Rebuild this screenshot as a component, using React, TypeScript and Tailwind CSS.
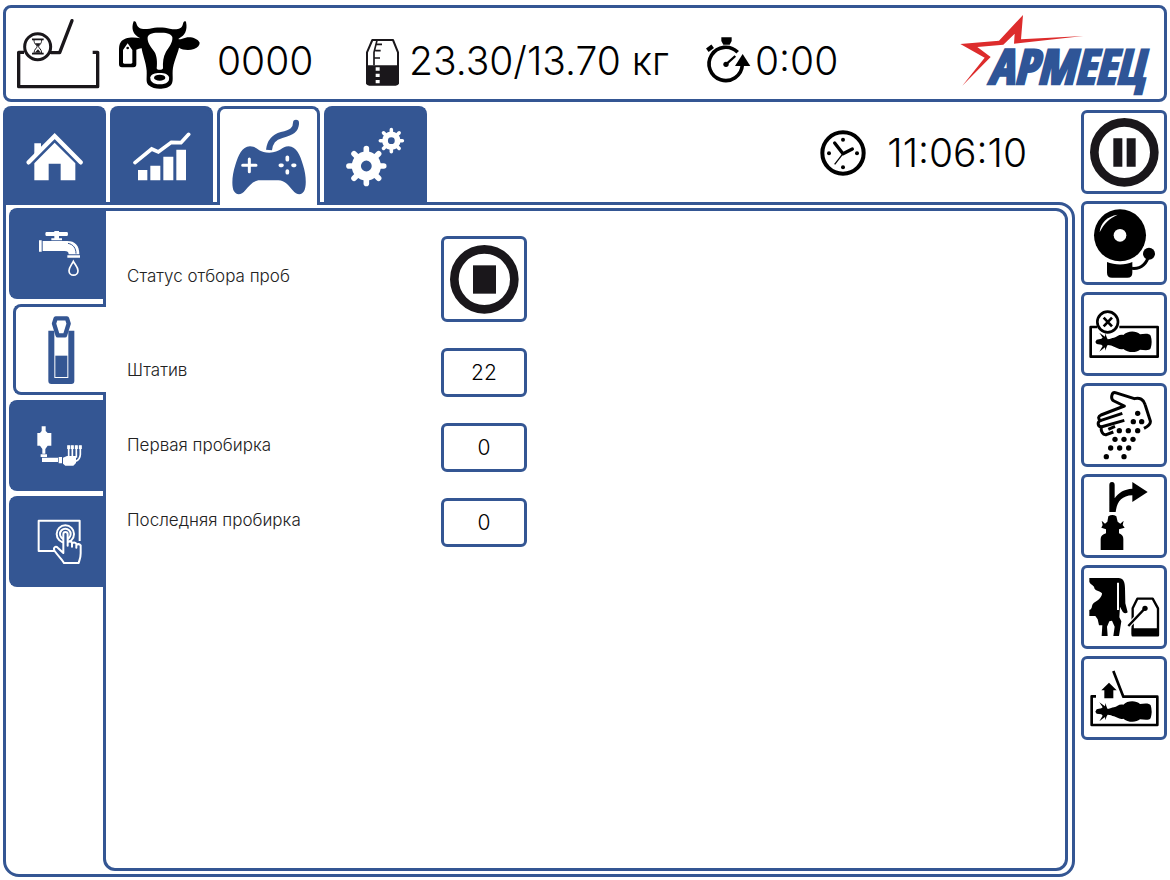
import React, { useState } from 'react';
import type { ReactNode } from 'react';

interface IconProps {
  box: string;
  className: string;
  children: ReactNode;
}

const Icon = ({ box, className, children }: IconProps) => (
  <svg viewBox={box} className={`shrink-0 ${className}`} fill="none" aria-hidden="true">
    {children}
  </svg>
);

// Header icons

const ScaleIcon = () => (
  <Icon box="45 54 258 216" className="w-[86px] h-[72px]">
    <g stroke="#1a171b" strokeWidth="10" strokeLinejoin="round">
      <path d="M72 157H56V260H293V157H278" />
      <path d="M154 158H179L216 62" strokeLinecap="round" />
      <circle cx="113" cy="140" r="39" strokeWidth="9" />
    </g>
    <path d="M96 118H131M96 161H131" stroke="#1a171b" strokeWidth="5" />
    <path d="M102 120C102 133 111 135 111 140C111 145 102 147 102 159M125 120C125 133 116 135 116 140C116 145 125 147 125 159" stroke="#1a171b" strokeWidth="3" />
    <path d="M105 130H122L114 140ZM104 158L114 148L123 158Z" fill="#1a171b" />
  </Icon>
);

const CowIcon = () => (
  <Icon box="354 60 252 210" className="w-[84px] h-[70px]">
    <path
      fill="#000"
      d="M404 67C399 80 398 97 410 108C416 114 421 116 424 118C400 112 375 116 366 128C360 136 360 145 360 155V196Q360 205 369 205H403Q412 205 412 196V152C418 150 424 147 428 148C430 165 441 190 443 215C444 240 440 247 448 258C458 267 470 269 482 269C495 269 508 267 516 258C524 247 520 235 521 215C523 190 536 165 540 146C550 153 570 155 585 150C597 145 602 138 602 131C596 118 575 112 560 116C550 119 543 122 538 120L543 116C555 110 567 95 561 68C555 64 553 70 551 78C547 92 530 92 512 89C495 84 470 84 452 89C430 92 418 90 413 76C411 68 409 65 404 67Z"
    />
    <path fill="#fff" d="M446 114C450 102 465 101 482 101C500 101 515 102 520 114C522 130 510 145 501 158C493 172 491 190 492 208C490 214 474 214 473 208C475 190 474 170 466 158C455 143 444 130 446 114Z" />
    <path fill="#fff" d="M454 235C456 225 468 222 482 222C498 222 508 226 510 235C512 248 504 256 482 256C462 256 453 248 454 235Z" />
    <ellipse cx="482" cy="236" rx="17" ry="9" fill="#000" />
    <path fill="#fff" d="M372 190V153L386 133L400 153V190Q400 194 396 194H376Q372 194 372 190Z" />
    <circle cx="386" cy="147" r="4" fill="#000" />
  </Icon>
);

const MilkCanIcon = () => (
  <Icon box="78 112 108 150" className="w-9 h-[50px]">
    <path d="M100 121H162L177 158V250H84V158Z" stroke="#1a171b" strokeWidth="6" strokeLinejoin="round" />
    <path d="M81 197H180V248Q180 258 170 258H91Q81 258 81 248Z" fill="#1a171b" />
    <path d="M114 122L105 158V197M112 134H129M109 153H125M106 175H123" stroke="#1a171b" strokeWidth="5" />
    <path d="M116 203V252" stroke="#fff" strokeWidth="12" strokeDasharray="10 9" />
  </Icon>
);

const StopwatchIcon = () => (
  <Icon box="1098 102 138 150" className="w-[46px] h-[50px]">
    <path d="M1210 192A50 50 0 1 1 1196 154" stroke="#000" strokeWidth="11" />
    <path d="M1188 195H1234L1211 159Z" fill="#000" />
    <path d="M1147 109H1178V120L1172 131H1153L1147 120Z" fill="#000" />
    <path d="M1105 148L1121 136" stroke="#000" strokeWidth="13" />
    <path d="M1161 190L1189 165" stroke="#000" strokeWidth="7" />
    <circle cx="1161" cy="190" r="8" fill="#000" />
  </Icon>
);

const Logo = () => (
  <svg viewBox="60 39 570 240" className="w-[190px] h-20 shrink-0 overflow-visible" role="img" aria-label="Армеец">
    <path fill="#dd2c2c" d="M61 129L177 119L249 42L243 115L430 105L222 128L224 98L190 131L112 138L152 168L67 254L134 170Z" />
    <text
      x="145"
      y="250"
      fontSize="144"
      fontWeight="700"
      fontStyle="italic"
      fill="#2f5597"
      stroke="#2f5597"
      strokeWidth="8"
      fontFamily="'Open Sans Condensed', 'Roboto Condensed', sans-serif"
    >
      АРМЕЕЦ
    </text>
  </svg>
);

const ClockIcon = () => (
  <Icon box="63 54 144 144" className="w-12 h-12">
    <circle cx="135" cy="126" r="62" stroke="#000" strokeWidth="12" />
    <path d="M135 128L110 96M135 128L163 114" stroke="#000" strokeWidth="10" strokeLinecap="round" />
    <path d="M135 128L110 160" stroke="#000" strokeWidth="4" />
    <g fill="#000">
      <circle cx="135" cy="86" r="6" />
      <circle cx="135" cy="169" r="6" />
      <circle cx="93" cy="127" r="6" />
      <circle cx="177" cy="127" r="6" />
    </g>
  </Icon>
);

// Top tab icons

const HomeIcon = () => (
  <Icon box="78 94 174 150" className="w-[58px] h-[50px]">
    <path d="M103 128H123V146L103 166Z" fill="#fff" />
    <path d="M86 185L164 106L242 185" stroke="#fff" strokeWidth="13" strokeLinecap="round" />
    <path d="M103 239V188L164 126L226 188V239H182V189H146V239Z" fill="#fff" />
  </Icon>
);

const ChartIcon = () => (
  <Icon box="399 90 174 150" className="w-[58px] h-[50px]">
    <path d="M414 204H442V235H414ZM451 191H481V235H451ZM490 164H520V235H490ZM529 143H558V235H529Z" fill="#fff" />
    <path d="M405 182L455 141L475 150L514 121L543 122L566 97" stroke="#fff" strokeWidth="11" strokeLinecap="round" />
  </Icon>
);

const GamepadIcon = () => (
  <Icon box="63 54 228 234" className="w-[76px] h-[78px]">
    <path d="M177 150C180 125 190 112 215 105C245 97 258 90 258 68" stroke="currentColor" strokeWidth="18" />
    <circle cx="258" cy="68" r="9" fill="currentColor" />
    <path
      fill="currentColor"
      d="M120 139C142 139 143 158 178 158C212 158 214 139 236 139C260 140 270 165 279 195C289 225 290 260 282 274C273 288 259 284 248 271C236 257 225 241 205 241H150C130 241 118 257 106 271C95 284 81 288 72 274C64 260 66 225 76 195C86 165 95 140 120 139Z"
    />
    <path d="M118 177V215M98 196H138" stroke="#fff" strokeWidth="9" strokeLinecap="round" />
    <path d="M232 172V179M232 213V218M211 196H216M249 196H254" stroke="#fff" strokeWidth="11" strokeLinecap="round" />
  </Icon>
);

interface GearProps {
  cx: number;
  cy: number;
  r: number;
}

const Gear = ({ cx, cy, r }: GearProps) => (
  <g stroke="#fff">
    <circle cx={cx} cy={cy} r={r * 0.5} strokeWidth={r * 0.46} />
    {[0, 45, 90, 135, 180, 225, 270, 315].map((angle) => (
      <line
        key={angle}
        x1={cx}
        y1={cy - r * 0.6}
        x2={cx}
        y2={cy - r * 0.87}
        strokeWidth={r * 0.28}
        strokeLinecap="round"
        transform={`rotate(${angle} ${cx} ${cy})`}
      />
    ))}
  </g>
);

const GearsIcon = () => (
  <Icon box="411 78 177 180" className="w-[59px] h-[60px]">
    <Gear cx={472} cy={195} r={60} />
    <Gear cx={547} cy={119} r={38} />
  </Icon>
);

// Side tab icons

const TapIcon = () => (
  <Icon box="108 393 129 141" className="w-[43px] h-[47px]">
    <path fill="#fff" d="M133 399H195Q198 399 198 405Q198 411 195 411H133Q130 411 130 405Q130 399 133 399ZM157 396H171V418H180V424H148V418H157ZM111 424H119V458H111Z" />
    <path fill="#fff" d="M122 426H195C220 426 232 440 232 466H200C200 458 196 456 188 456H122ZM196 469H234V476H196Z" />
    <path d="M198 433C214 436 222 448 222 464" stroke="#345693" strokeWidth="3" />
    <path d="M214 487C209 497 201 505 201 515A13 13 0 0 0 228 515C228 505 219 497 214 487Z" stroke="#fff" strokeWidth="5" />
  </Icon>
);

const TubeIcon = () => (
  <Icon box="138 60 87 210" className="w-[29px] h-[70px]">
    <path d="M151 107V258H211V107" stroke="currentColor" strokeWidth="18" strokeLinejoin="round" />
    <path d="M163 182H199V246H163Z" fill="currentColor" />
    <path d="M164 70H198L203 86L192 121H170L159 86Z" fill="#fff" stroke="currentColor" strokeWidth="13" strokeLinejoin="round" />
  </Icon>
);

const SamplerIcon = () => (
  <Icon box="102 390 141 126" className="w-[47px] h-[42px]">
    <path fill="#fff" d="M119 394H131V408L137 414H148V452H137L130 462V476H121V462L114 452H106V414H114L119 408ZM116 478H135V486H116ZM120 488H168V501H120ZM170 486H180V505H170ZM183 488L195 483H222V504L214 512H190L183 506Z" />
    <path d="M200 452V485M211 452V485M223 452V488M235 452V478Q234 494 221 499" stroke="#fff" strokeWidth="5" />
    <path d="M200 451V462M211 451V462M223 451V462M235 451V462" stroke="#fff" strokeWidth="9" />
  </Icon>
);

const TouchIcon = () => (
  <Icon box="105 672 135 138" className="w-[45px] h-[46px]">
    <g stroke="#fff" strokeWidth="6" strokeLinejoin="round">
      <path d="M158 768H110V677H233V738" />
      <circle cx="190" cy="717" r="26" />
      <circle cx="190" cy="717" r="16" />
      <path fill="#345693" d="M184 774V718Q184 711 190 711Q197 711 197 718V752V742Q204 736 210 742V755V745Q217 739 223 746V758V750Q230 744 236 751V775C236 790 232 795 230 804H186C182 795 170 785 158 768C152 757 161 752 168 759Z" />
    </g>
  </Icon>
);

// Control button icons

const PauseIcon = () => (
  <Icon box="0 0 207 207" className="w-[69px] h-[69px]">
    <circle cx="103" cy="103" r="90" stroke="#1a171b" strokeWidth="26" />
    <path d="M70 61H97V146H70ZM110 61H137V146H110Z" fill="#1a171b" />
  </Icon>
);

const StopIcon = () => (
  <Icon box="0 0 207 207" className="w-[69px] h-[69px]">
    <circle cx="103" cy="103" r="90" stroke="#1a171b" strokeWidth="26" />
    <path d="M69 61H138V146H69Z" fill="#1a171b" />
  </Icon>
);

const BellIcon = () => (
  <Icon box="66 51 189 210" className="w-[63px] h-[70px]">
    <path d="M108 213C130 223 165 223 184 213V245Q184 260 169 260H123Q108 260 108 245Z" fill="#000" />
    <path d="M183 232C212 235 229 215 234 190" stroke="#000" strokeWidth="9" />
    <circle cx="234" cy="188" r="18" fill="#000" />
    <circle cx="147" cy="133" r="81" fill="#fff" />
    <circle cx="147" cy="133" r="78" fill="#000" />
    <circle cx="147" cy="133" r="19" fill="#fff" />
    <path d="M86 124C88 96 108 76 140 71C116 82 99 96 86 124Z" fill="#fff" />
  </Icon>
);

const CowTop = () => (
  <path
    fill="#000"
    d="M76 456L80 449L94 446L98 443L88 428L105 440L106 430L110 442L113 448C122 447 125 444 132 443C141 441 147 432 160 435C172 422 198 421 210 433C222 431 238 429 242 437Q248 456 242 475C238 483 222 480 210 479C198 490 172 488 160 477C147 480 141 472 132 470C125 468 122 465 113 465L110 470L106 482L105 472L88 485L98 468L94 464L80 462Z"
  />
);

const StallStopIcon = () => (
  <Icon box="57 360 213 144" className="w-[71px] h-12">
    <path d="M82 411H62V500H263V411H148" stroke="#000" strokeWidth="8" strokeLinejoin="round" />
    <circle cx="113" cy="396" r="31" stroke="#000" strokeWidth="8" />
    <path d="M101 383L126 409M126 383L101 409" stroke="#000" strokeWidth="8" />
    <CowTop />
  </Icon>
);

const FeedIcon = () => (
  <Icon box="75 45 168 213" className="w-14 h-[71px]">
    <g stroke="#000" strokeWidth="9" strokeLinejoin="round">
      <path d="M127 171L106 179C95 181 90 170 90 156C78 152 80 140 88 137C80 130 82 124 90 120L160 93L129 78C117 72 122 51 133 53L190 71C206 66 218 74 222 88L238 138C240 148 230 154 219 160" />
      <path d="M88 137L154 115M90 156L160 136M112 163L132 154" />
    </g>
    {[[200, 115], [187, 140], [212, 140], [145, 167], [172, 167], [200, 167], [132, 193], [159, 193], [186, 193], [119, 219], [146, 219], [173, 219], [106, 245], [159, 245]].map(([cx, cy]) => (
      <circle key={`${cx}-${cy}`} cx={cx} cy={cy} r="8" fill="#000" />
    ))}
  </Icon>
);

const GateIcon = () => (
  <Icon box="78 318 171 210" className="w-[57px] h-[70px]">
    <path d="M118 411V330Q118 321 126 321Q134 321 134 330V370C146 352 162 343 187 341V321L233 351L187 381V361C155 362 141 380 137 411Z" fill="#000" />
    <path d="M115 424Q127 416 139 424L143 440L151 446L161 437L158 450L164 458L147 463V475Q160 480 160 492V525H92V492Q92 480 108 475V463L94 458L98 450L95 437L105 446L112 440Z" fill="#000" />
  </Icon>
);

const MilkingIcon = () => (
  <Icon box="54 51 216 180" className="w-[72px] h-[60px]">
    <path fill="#000" d="M58 54H145C160 54 165 65 165 85L166 130L173 157Q165 163 158 155L150 140L148 172L154 184L147 228H130L134 200L126 182L118 184L111 200L113 228H95L97 196H87L83 178L76 168H58V150C70 145 62 136 72 128C85 121 96 112 96 100C90 90 74 96 72 80C66 72 60 72 58 65Z" />
    <path d="M144 68V150" stroke="#fff" strokeWidth="6" />
    <path d="M202 116H248L264 145V226H188V145Z" stroke="#000" strokeWidth="7" strokeLinejoin="round" />
    <path d="M185 205H267V222Q267 228 261 228H191Q185 228 185 222Z" fill="#000" />
    <path d="M175 198L222 148" stroke="#fff" strokeWidth="14" />
    <path d="M175 198L222 148" stroke="#000" strokeWidth="7" />
    <circle cx="225" cy="145" r="8" fill="#000" />
  </Icon>
);

const StallOpenIcon = () => (
  <Icon box="57 328 213 174" className="w-[71px] h-[58px]">
    <path d="M78 410H65V496H262V411H160L130 334" stroke="#000" strokeWidth="8" strokeLinejoin="round" />
    <path d="M117 369L140 392H130V416H103V392H94Z" fill="#000" />
    <CowTop />
  </Icon>
);

const topTabs = [
  { id: 'home', label: 'Главная', icon: <HomeIcon /> },
  { id: 'stats', label: 'Статистика', icon: <ChartIcon /> },
  { id: 'control', label: 'Управление', icon: <GamepadIcon /> },
  { id: 'settings', label: 'Настройки', icon: <GearsIcon /> },
];

const sideTabs = [
  { id: 'wash', label: 'Промывка', icon: <TapIcon /> },
  { id: 'samples', label: 'Отбор проб', icon: <TubeIcon /> },
  { id: 'sampler', label: 'Пробоотборник', icon: <SamplerIcon /> },
  { id: 'screen', label: 'Экран', icon: <TouchIcon /> },
];

const controls = [
  { label: 'Пауза', icon: <PauseIcon /> },
  { label: 'Сигнал', icon: <BellIcon /> },
  { label: 'Запретить вход', icon: <StallStopIcon /> },
  { label: 'Корм', icon: <FeedIcon /> },
  { label: 'Ворота', icon: <GateIcon /> },
  { label: 'Доение', icon: <MilkingIcon /> },
  { label: 'Выпустить', icon: <StallOpenIcon /> },
];

const fields = [
  { id: 'rack', label: 'Штатив', value: '22' },
  { id: 'first', label: 'Первая пробирка', value: '0' },
  { id: 'last', label: 'Последняя пробирка', value: '0' },
];

const Header = () => (
  <header className="flex h-[97px] items-center rounded-lg border-3 border-[#345693] pl-[9px] pr-[14px] text-[39px] font-light">
    <ScaleIcon />
    <div className="ml-4 flex items-center">
      <CowIcon />
      <span className="ml-4 w-[148px] pt-4">0000</span>
    </div>
    <div className="flex items-center pt-4">
      <MilkCanIcon />
      <span className="ml-2 w-[296px] whitespace-nowrap">23.30/13.70 кг</span>
    </div>
    <div className="flex items-center">
      <span className="pt-3"><StopwatchIcon /></span>
      <span className="ml-1 pt-4">0:00</span>
    </div>
    <div className="ml-auto">
      <Logo />
    </div>
  </header>
);

export default function App() {
  const [topTab, setTopTab] = useState('control');
  const [sideTab, setSideTab] = useState('samples');

  return (
    <div className="flex min-h-screen flex-col gap-1 bg-white px-[3px] pt-[5px] pb-[3px] font-[Inter,'Noto_Sans',sans-serif] text-black">
      <Header />

      <div className="flex flex-1 gap-[6px]">
        <main className="flex min-w-0 flex-1 flex-col">
          {/* Top tabs lie over the panel's top border */}
          <div className="relative z-10 -mb-[3px] flex items-start">
            <nav className="flex gap-1">
              {topTabs.map((tab) => (
                <button
                  key={tab.id}
                  type="button"
                  aria-label={tab.label}
                  onClick={() => setTopTab(tab.id)}
                  className={`flex h-[99px] w-[103px] items-center justify-center rounded-t-lg border-3 border-b-0 border-[#345693] text-[#345693] ${topTab === tab.id ? 'bg-white' : 'bg-[#345693]'}`}
                >
                  {tab.icon}
                </button>
              ))}
            </nav>
            <div className="ml-auto mr-12 flex items-center gap-5 pt-[23px] text-[39px] leading-[48px] font-light">
              <ClockIcon />
              <time>11:06:10</time>
            </div>
          </div>

          <div className="flex flex-1 rounded-2xl rounded-tl-none border-3 border-[#345693] pt-[3px] pr-1 pb-[3px]">
            <nav className="relative z-10 -mr-[3px] flex w-[100px] flex-col items-end gap-[5px]">
              {sideTabs.map((tab) => (
                <button
                  key={tab.id}
                  type="button"
                  aria-label={tab.label}
                  onClick={() => setSideTab(tab.id)}
                  className={`flex h-[91px] items-center justify-center rounded-l-lg border-3 border-r-0 border-[#345693] text-[#345693] ${sideTab === tab.id ? 'w-[93px] bg-white' : 'w-[97px] bg-[#345693]'}`}
                >
                  {tab.icon}
                </button>
              ))}
            </nav>

            <section className="flex flex-1 flex-col gap-[26px] rounded-xl rounded-tl-none border-3 border-[#345693] px-[21px] pt-[25px] pb-6">
              <div className="flex items-center">
                <label htmlFor="status" className="w-[314px] pb-1 text-[17px] font-light text-[#222]">Статус отбора проб</label>
                <button
                  id="status"
                  type="button"
                  className="flex h-[86px] w-[86px] items-center justify-center rounded-md border-3 border-[#345693]"
                >
                  <StopIcon />
                </button>
              </div>
              {fields.map((field) => (
                <div key={field.id} className="flex items-center">
                  <label htmlFor={field.id} className="w-[314px] pb-1 text-[17px] font-light text-[#222]">{field.label}</label>
                  <input
                    id={field.id}
                    type="text"
                    inputMode="numeric"
                    defaultValue={field.value}
                    className="h-[49px] w-[86px] rounded-md border-3 border-[#345693] text-center text-[21px] font-light"
                  />
                </div>
              ))}
            </section>
          </div>
        </main>

        <aside className="flex flex-col gap-[7px] pt-1">
          {controls.map((control) => (
            <button
              key={control.label}
              type="button"
              aria-label={control.label}
              className="flex h-[84px] w-[86px] items-center justify-center rounded-md border-3 border-[#345693]"
            >
              {control.icon}
            </button>
          ))}
        </aside>
      </div>
    </div>
  );
}
